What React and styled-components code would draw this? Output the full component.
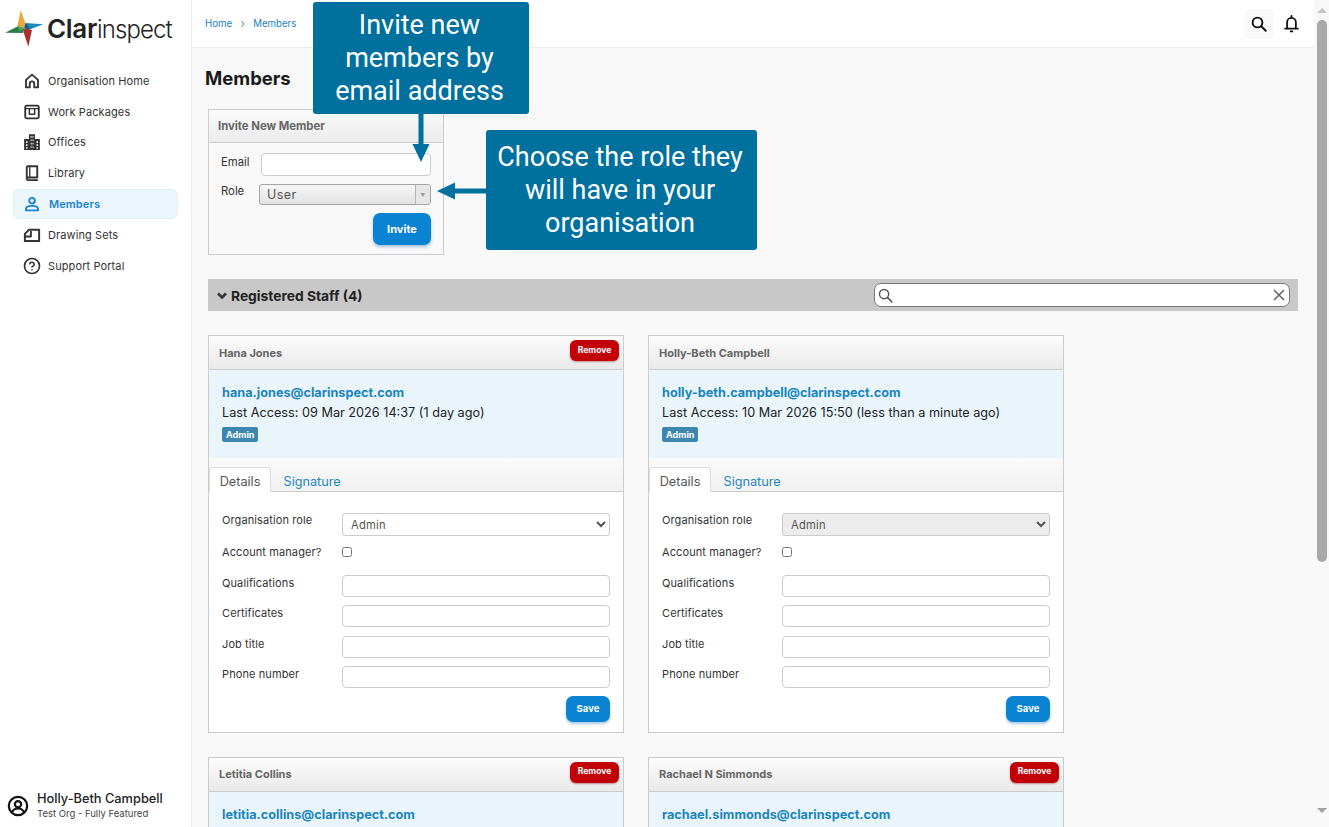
import React from "react";
import styled, { createGlobalStyle } from "styled-components";
import { CircleHelp } from "lucide-react";

const Global = createGlobalStyle`
  html, body { margin: 0; padding: 0; height: 100%; overflow: hidden; }
  body { font-family: Inter, "Liberation Sans", sans-serif; color: #222; background: #f8f8f8; }
  * { box-sizing: border-box; }
`;

const Shell = styled.div`display: flex; height: 827px; width: 1329px; overflow: hidden;`;

const Sidebar = styled.aside`
  width: 192px; flex: none; background: #fff; border-right: 1px solid #ececec;
  display: flex; flex-direction: column; padding-bottom: 7px;
`;
const LogoRow = styled.div`display: flex; align-items: center; height: 65.4px; padding: 0 0 8px 5px;`;
const LogoText = styled.div`font-size: 24px; letter-spacing: -0.9px; color: #222; font-weight: 300; margin-left: 3px; line-height: 1; white-space: nowrap;`;
const LogoStrong = styled.span`font-weight: 600; font-size: 26px; letter-spacing: -0.3px;`;
const Nav = styled.nav`display: flex; flex-direction: column; padding: 0 13px;`;
const NavItem = styled.a`
  display: flex; align-items: center; height: 30.8px; padding-left: 9px; gap: ${p => (p.$active ? 8 : 7)}px; border-radius: 6px;
  font-size: 11px; letter-spacing: 0.1px; color: ${p => (p.$active ? "#1b84d2" : "#333")};
  font-weight: ${p => (p.$active ? 600 : 400)};
  background: ${p => (p.$active ? "#ebf6fd" : "transparent")};
  border: 1px solid ${p => (p.$active ? "#e0f0fa" : "transparent")};
  svg { flex: none; width: 18px; height: 18px; }
`;
const Footer = styled.div`margin-top: auto; display: flex; align-items: center; gap: 8px; padding-left: 7px;`;
const FooterName = styled.div`font-size: 12.8px; font-weight: 500; color: #222; line-height: 16px;`;
const FooterOrg = styled.div`font-size: 9.5px; color: #444; line-height: 13px;`;

const Right = styled.div`flex: 1; min-width: 0; height: 827px; overflow: hidden; position: relative; background: #f8f8f8;`;
const Scrollbar = styled.div`
  width: 15px; flex: none; height: 827px; background: #f8f8f8; display: flex; flex-direction: column; align-items: center;
  padding: 8px 0 12px;
`;
const ScrollThumb = styled.div`width: 10px; height: 542px; margin-top: 7px; border-radius: 5px; background: #a8a8a8; flex: none;`;
const ScrollEnd = styled.svg`flex: none; margin-top: ${p => p.$top || 0}px;`;

const TopBar = styled.header`
  height: 48px; background: #fff; border-bottom: 1px solid #ececec; display: flex; align-items: center;
  justify-content: space-between; padding: 0 8px 0 13px;
`;
const Crumbs = styled.div`display: flex; align-items: center; gap: 7px; font-size: 9.7px; color: #1b7fc4; margin-top: -1px;`;
const CrumbSep = styled.span`color: #999; font-size: 13px; line-height: 1; padding: 0 1px;`;
const TopActions = styled.div`display: flex; align-items: center; gap: 2px;`;
const IconBtn = styled.button`
  width: 30px; height: 30px; border: 0; border-radius: 5px; padding: 0; display: flex; align-items: center; justify-content: center;
  background: ${p => (p.$soft ? "#f9f9f9" : "transparent")}; color: #111;
`;
const Main = styled.main`padding: 17px 16px 0 13px;`;
const Title = styled.h1`margin: 0 0 17px; font-size: 18.5px; line-height: 27px; font-weight: 700; color: #1a1a1a;`;
const Indented = styled.div`padding-left: 3px;`;

const InvitePanel = styled.section`width: 236px; height: 146px; border: 1px solid #ccc; background: #f8f8f8;`;
const PanelHead = styled.div`
  height: 33px; padding-left: 9px; display: flex; align-items: center; font-size: 11.3px; font-weight: 700; color: #666;
  background: linear-gradient(#fbfbfb, #ebebeb); border-bottom: 1px solid #ccc; padding-bottom: 1px;
`;
const PanelBody = styled.div`padding: 10px 12px 0 12px;`;
const InviteRow = styled.div`display: flex; align-items: flex-start; height: 31px;`;
const InviteLabel = styled.label`font-size: 11.3px; color: #333; width: ${p => p.$w}px; flex: none; padding-top: ${p => p.$pt}px;`;
const TextInput = styled.input`
  display: block; width: ${p => p.$w || "100%"}; height: ${p => p.$h || 22}px; border: 1px solid #ccc; border-radius: 4px; background: #fff; padding: 0 8px; outline: none;
`;
const Combo = styled.div`
  width: 172px; height: 21px; border: 1px solid #a5a5a5; border-radius: 3px; background: linear-gradient(#f5f5f5, #e2e2e2);
  font-size: 12.5px; letter-spacing: 0.4px; color: #555; display: flex; align-items: center; justify-content: space-between; padding-left: 7px;
`;
const ComboBtn = styled.span`
  width: 15px; height: 100%; border-left: 1px solid #b5b5b5; background: #e6e6e6; color: #999; font-size: 5px;
  display: flex; align-items: center; justify-content: center; border-radius: 0 2px 2px 0;
`;
const Actions = styled.div`display: flex; justify-content: flex-end; margin-top: ${p => p.$mt || 0}px;`;
const Button = styled.button`
  height: ${p => p.$h}px; width: ${p => p.$w}px; border: 0; border-radius: 7px; background: #0a84d2; color: #fff;
  font: 700 ${p => p.$fs}px Inter, sans-serif; box-shadow: 0 2px 3px rgba(10, 100, 170, .35);
`;

const StaffBar = styled.div`
  height: 32px; margin-top: 24px; background: #c8c8c8; display: flex; align-items: center; padding: 0 8px 0 9px;
  font-size: 13.8px; font-weight: 700; color: #222;
`;
const StaffTitle = styled.div`display: flex; align-items: center; gap: 4px; padding-top: 2px;`;
const StaffSearch = styled.div`
  margin-left: auto; width: 416px; height: 24px; background: #fff; border: 1px solid #777; border-radius: 7px;
  display: flex; align-items: center; justify-content: space-between; padding: 0 2px;
`;

const Cards = styled.div`display: flex; flex-wrap: wrap; column-gap: 24px; row-gap: 23.5px; margin-top: 24px; width: 880px;`;
const Card = styled.article`width: 416px; height: 398px; background: #fff; border: 1px solid #ccc; position: relative;`;
const CardHead = styled.div`
  height: 34px; padding-left: 10px; display: flex; align-items: center; font-size: 11px; font-weight: 700; color: #666;
  background: linear-gradient(#fcfcfc, #e9e9e9); border-bottom: 1px solid #ccc;
`;
const RemoveBtn = styled.button`
  position: absolute; right: 4px; top: 4px; width: 49px; height: 21px; border: 0; border-radius: 6px; background: #c10007;
  color: #fff; font: 700 8.6px Inter, sans-serif; padding: 0 0 2px; box-shadow: 0 1px 2px rgba(120, 0, 0, .4);
`;
const Info = styled.div`height: 88px; background: #e9f5fb; padding: 15px 13px 0;`;
const Email = styled.div`font-size: 12.7px; font-weight: 700; color: #1a85c0; line-height: 16px;`;
const Access = styled.div`font-size: 12.7px; color: #222; line-height: 16px; margin-top: 4px;`;
const Badge = styled.span`
  display: inline-block; margin-top: 6px; height: 15px; padding: 0 4px; border-radius: 2px; background: #3d87ae; color: #fff;
  font-size: 9px; font-weight: 700; line-height: 15px;
`;
const Tabs = styled.div`
  height: 34px; background: linear-gradient(#fafafa, #f2f2f2); border-bottom: 1px solid #ccc; display: flex; align-items: flex-end;
`;
const Tab = styled.div`
  height: 25px; margin-bottom: -1px; width: ${p => (p.$active ? "62px" : "auto")}; padding: 3px ${p => (p.$active ? 0 : 11.5)}px 0;
  display: flex; align-items: center; justify-content: center; font-size: 12.7px;
  color: ${p => (p.$active ? "#555" : "#1f86c2")}; background: ${p => (p.$active ? "#fff" : "transparent")};
  border: 1px solid ${p => (p.$active ? "#ddd" : "transparent")}; border-bottom-color: ${p => (p.$active ? "#fff" : "transparent")};
  border-radius: 3px 3px 0 0;
`;
const Form = styled.div`padding: 21px 13px 0;`;
const Row = styled.div`
  display: grid; grid-template-columns: 120px 1fr; height: ${p => p.$h || 22}px; margin-bottom: ${p => p.$mb ?? 8.33}px;
`;
const Label = styled.label`font-size: 11px; color: #333; padding-top: ${p => p.$pt ?? 1}px; letter-spacing: 0.1px;`;
const Select = styled.select`
  width: 268px; height: 23px; border: 1px solid #ccc; border-radius: 3px; font: 400 11.2px Inter, sans-serif; letter-spacing: 0.2px;
  color: #555; opacity: 1; padding-left: 4px; background-color: ${p => (p.disabled ? "#ececec" : "#fff")};
`;
const Check = styled.input`margin: 5px 0 0; width: 10px; height: 10px;`;

const Callout = styled.div`
  position: absolute; left: ${p => p.$x}px; top: ${p => p.$y}px; width: ${p => p.$w}px; height: ${p => p.$h}px;
  background: #00709f; color: #fff; border-radius: 3px; display: flex; align-items: center; justify-content: center;
  text-align: center; font: 400 27px/33px Roboto, sans-serif; padding: ${p => p.$pt}px 3px 0 0;
`;
const ArrowDownMark = styled.svg`position: absolute; left: 219px; top: 114px;`;
const ArrowLeftMark = styled.svg`position: absolute; left: 245px; top: 181px;`;

const Ic = ({ children, size = 18, sw = 2.5 }) => (
  <svg width={size} height={size} viewBox="0 0 24 24" fill="none" stroke="currentColor" strokeWidth={sw} strokeLinecap="round" strokeLinejoin="round">{children}</svg>
);

const HomeIcon = () => <Ic><path d="M4 20.5V10.5L12 3.5l8 7v10h-5v-5a3 3 0 0 0-6 0v5z" /></Ic>;
const PackageIcon = () => <Ic><rect x="3" y="3.5" width="18" height="17" rx="2" /><path d="M3 7.5h18" strokeWidth="1.8" /><path d="M8.5 7.5v7.5h7V7.5" strokeWidth="2" /></Ic>;
const OfficeIcon = () => (
  <svg viewBox="0 0 24 24" fill="currentColor"><path fillRule="evenodd" d="M8 1.5h8V8h6.5v14.5h-21V8H8zM10.2 4v2.2h1.3V4zm2.5 0v2.2H14V4zM10.2 8.5v2.2h1.3V8.5zm2.5 0v2.2H14V8.5zM4 11v2.2h2V11zm0 4v2.2h2V15zm0 4v2h2v-2zM10.2 13v2.2h1.3V13zm2.5 0v2.2H14V13zM10.2 17.5v2.2h1.3v-2.2zm2.5 0v2.2H14v-2.2zM18 11v2.2h2V11zm0 4v2.2h2V15zm0 4v2h2v-2z" /></svg>
);
const BookIcon = () => <Ic><path d="M5 19V4.5A1.5 1.5 0 0 1 6.5 3H19v15H7a2 2 0 0 0-2 1.5 2 2 0 0 0 2 2h12" /><path d="M9 3v15" strokeWidth="1.8" /></Ic>;
const PersonIcon = () => <Ic sw={2.6}><circle cx="12" cy="7.5" r="3.7" /><path d="M4 20.5v-2C4 16 6.5 14.5 12 14.5s8 1.5 8 4v2z" /></Ic>;
const DrawingIcon = () => <Ic sw={2.6}><path d="M2.5 20V10.5L8 5h13.5v15z" /><path d="M2.5 14h8V7.5" /></Ic>;

const items = [
  ["Organisation Home", <HomeIcon />],
  ["Work Packages", <PackageIcon />],
  ["Offices", <OfficeIcon />],
  ["Library", <BookIcon />],
  ["Members", <PersonIcon />, true],
  ["Drawing Sets", <DrawingIcon />],
  ["Support Portal", <CircleHelp strokeWidth={2.2} />],
];

const Logo = () => (
  <svg width="39" height="38" viewBox="0 0 39 38">
    <path d="M15.7 0 L20.5 13.5 L19.5 18.3 L12.5 15.5 Z" fill="#eba83a" />
    <path d="M38.3 14.3 L24.5 19.5 L19.5 18.3 L20.5 13 Z" fill="#1f86bb" />
    <path d="M23.3 36.7 L18.5 22 L19.5 18.3 L27 20 Z" fill="#a9322e" />
    <path d="M0 22.7 L12.5 16.5 L19.5 18.3 L18 23 Z" fill="#2d7d4b" />
    <path d="M12.5 15.5 L19.5 18.3 L14.5 21 Z" fill="#58a654" />
    <path d="M20.5 13 L19.5 18.3 L25 19.3 Z" fill="#19547f" />
  </svg>
);

const SearchGlyph = ({ size = 20, sw = 2.4, color = "currentColor" }) => (
  <svg width={size} height={size} viewBox="0 0 24 24" fill="none" stroke={color} strokeWidth={sw} strokeLinecap="round">
    <circle cx="10" cy="10" r="6.5" /><path d="M15 15l6 6" />
  </svg>
);

const Member = ({ name, email, access, removable, locked }) => (
  <Card>
    <CardHead>{name}</CardHead>
    {removable && <RemoveBtn>Remove</RemoveBtn>}
    <Info>
      <Email>{email}</Email>
      {access && <Access>{access}</Access>}
      {access && <Badge>Admin</Badge>}
    </Info>
    {access && (
      <>
        <Tabs>
          <Tab $active>Details</Tab>
          <Tab>Signature</Tab>
        </Tabs>
        <Form>
          <Row $h={23} $mb={5}><Label $pt={0}>Organisation role</Label><Select disabled={locked} defaultValue="Admin"><option>Admin</option><option>User</option></Select></Row>
          <Row $mb={12}><Label $pt={4}>Account manager?</Label><div><Check type="checkbox" /></div></Row>
          <Row><Label>Qualifications</Label><TextInput /></Row>
          <Row><Label>Certificates</Label><TextInput /></Row>
          <Row><Label>Job title</Label><TextInput /></Row>
          <Row $mb={8}><Label>Phone number</Label><TextInput /></Row>
          <Actions><Button $w={44} $h={26} $fs={9.5}>Save</Button></Actions>
        </Form>
      </>
    )}
  </Card>
);

export default function App() {
  return (
    <Shell>
      <Global />
      <Sidebar>
        <LogoRow>
          <Logo />
          <LogoText><LogoStrong>Clar</LogoStrong>inspect</LogoText>
        </LogoRow>
        <Nav>
          {items.map(([label, icon, active]) => (
            <NavItem key={label} $active={active}>{icon}<span>{label}</span></NavItem>
          ))}
        </Nav>
        <Footer>
          <svg width="22" height="22" viewBox="0 0 24 24" fill="none" stroke="#111" strokeWidth="2.4">
            <circle cx="12" cy="12" r="10" /><circle cx="12" cy="10" r="3.4" /><path d="M5.5 19c1-3 3.5-4.3 6.5-4.3s5.5 1.3 6.5 4.3" />
          </svg>
          <div>
            <FooterName>Holly-Beth Campbell</FooterName>
            <FooterOrg>Test Org - Fully Featured</FooterOrg>
          </div>
        </Footer>
      </Sidebar>
      <Right>
        <TopBar>
          <Crumbs><span>Home</span><CrumbSep>›</CrumbSep><span>Members</span></Crumbs>
          <TopActions>
            <IconBtn $soft><SearchGlyph size={18} sw={2.6} /></IconBtn>
            <IconBtn>
              <svg width="19" height="19" viewBox="0 0 24 24" fill="none" stroke="#111" strokeWidth="2.3" strokeLinecap="round" strokeLinejoin="round">
                <path d="M6.5 18V10.500a5.500 5.500 0 0 1 11 0V18" /><path d="M4 18.5h16" /><path d="M12 2.5v2" /><path d="M11 22h2" />
              </svg>
            </IconBtn>
          </TopActions>
        </TopBar>
        <Main>
          <Title>Members</Title>
          <Indented>
            <InvitePanel>
              <PanelHead>Invite New Member</PanelHead>
              <PanelBody>
                <InviteRow><InviteLabel $w={40} $pt={2}>Email</InviteLabel><TextInput $w="170px" $h={23} /></InviteRow>
                <InviteRow><InviteLabel $w={38} $pt={0}>Role</InviteLabel><Combo>User<ComboBtn>▼</ComboBtn></Combo></InviteRow>
                <Actions $mt={-2}><Button $w={58} $h={32} $fs={11}>Invite</Button></Actions>
              </PanelBody>
            </InvitePanel>
            <StaffBar>
              <StaffTitle>
                <svg width="10" height="8" viewBox="0 0 10 8" fill="none" stroke="#333" strokeWidth="2.6"><path d="M1 1.5l4 4 4-4" /></svg>
                Registered Staff (4)
              </StaffTitle>
              <StaffSearch>
                <SearchGlyph size={17} sw={2} color="#555" />
                <svg width="16" height="16" viewBox="0 0 16 16" fill="none" stroke="#666" strokeWidth="1.6"><path d="M3 3l10 10M13 3L3 13" /></svg>
              </StaffSearch>
            </StaffBar>
            <Cards>
              <Member name="Hana Jones" email="hana.jones@clarinspect.com" access="Last Access: 09 Mar 2026 14:37 (1 day ago)" removable />
              <Member name="Holly-Beth Campbell" email="holly-beth.campbell@clarinspect.com" access="Last Access: 10 Mar 2026 15:50 (less than a minute ago)" locked />
              <Member name="Letitia Collins" email="letitia.collins@clarinspect.com" removable />
              <Member name="Rachael N Simmonds" email="rachael.simmonds@clarinspect.com" removable />
            </Cards>
          </Indented>
        </Main>
        <Callout $x={121} $y={2} $w={216} $h={112} $pt={1}>Invite new<br />members by<br />email address</Callout>
        <Callout $x={294} $y={130} $w={271} $h={120} $pt={0}>Choose the role they<br />will have in your<br />organisation</Callout>
        <ArrowDownMark width="20" height="48" viewBox="0 0 20 48"><path d="M7.5 0h5v30h6L10 48 1.5 30h6z" fill="#00709f" /></ArrowDownMark>
        <ArrowLeftMark width="50" height="20" viewBox="0 0 50 20"><path d="M50 7.5v5H18v6L0 10l18-8.5v6z" fill="#00709f" /></ArrowLeftMark>
      </Right>
      <Scrollbar>
        <ScrollEnd width="10" height="5" viewBox="0 0 10 5"><path d="M0 5 L5 0 L10 5 Z" fill="#c4c4c4" /></ScrollEnd>
        <ScrollThumb />
        <ScrollEnd $top={246} width="10" height="5" viewBox="0 0 10 5"><path d="M0 0 L5 5 L10 0 Z" fill="#a0a0a0" /></ScrollEnd>
      </Scrollbar>
    </Shell>
  );
}
